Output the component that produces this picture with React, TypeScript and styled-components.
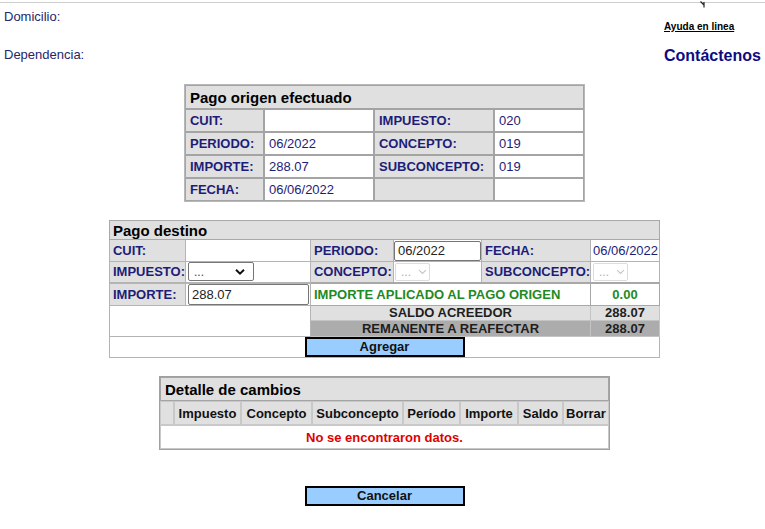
import React from "react";
import styled, { createGlobalStyle } from "styled-components";

const GlobalStyle = createGlobalStyle`
  html, body { margin: 0; padding: 0; background: #fff; }
  body { font-family: "Liberation Sans", Arial, Helvetica, sans-serif; }
`;

const FONT = `"Liberation Sans", Arial, Helvetica, sans-serif`;
const NAVY = "#1d1d78";

const Page = styled.div`
  width: 765px;
  padding-top: 2px;
`;

const TopBar = styled.header`
  border-top: 1px solid #cfcfcf;
  height: 81px;
  display: flex;
  justify-content: space-between;
  padding-left: 4px;
`;

const InfoList = styled.div`
  display: flex;
  flex-direction: column;
  gap: 23px;
  padding-top: 6px;
`;

const InfoLabel = styled.div`
  font-size: 13px;
  line-height: 15px;
  color: #262668;
`;

const Links = styled.div`
  width: 101px;
  display: flex;
  flex-direction: column;
  align-items: flex-start;
`;

const BrokenIcon = styled.svg`
  margin-left: 36px;
  margin-top: -2px;
  display: block;
`;

const HelpLink = styled.a`
  margin-top: 13px;
  font-size: 10px;
  line-height: 12px;
  font-weight: bold;
  color: #000;
  text-decoration: underline;
`;

const ContactLink = styled.a`
  margin-top: 14px;
  font-size: 16px;
  line-height: 18px;
  font-weight: bold;
  color: #0c0c80;
  text-decoration: none;
`;

const Content = styled.main`
  display: flex;
  flex-direction: column;
  align-items: center;
  padding-left: 4px;
`;

const OriginTable = styled.table`
  width: 401px;
  table-layout: fixed;
  border-collapse: separate;
  border-spacing: 0;
  border: 1px solid #b8b8b8;
  font-family: ${FONT};
`;

const OriginCell = styled.td<{ $label?: boolean }>`
  height: 21px;
  padding: 0 4px;
  border: 1px solid #a4a4a4;
  background: ${(p) => (p.$label ? "#e0e0e0" : "#fff")};
  color: ${NAVY};
  font-size: 13px;
  font-weight: ${(p) => (p.$label ? "bold" : "normal")};
  white-space: nowrap;
  overflow: hidden;
`;

const Caption = styled.th<{ $h: number }>`
  height: ${(p) => p.$h}px;
  padding: 0 4px;
  text-align: left;
  background: #e0e0e0;
  color: #000;
  font-size: 15px;
  font-weight: bold;
  border: 1px solid #a4a4a4;
`;

const DestTable = styled.table`
  margin-top: 18px;
  width: 550px;
  table-layout: fixed;
  border-collapse: collapse;
  border: 1px solid #a8a8a8;
  font-family: ${FONT};
`;

const DestCaption = styled.th`
  height: 18px;
  padding: 0 3px;
  text-align: left;
  background: #e0e0e0;
  color: #000;
  font-size: 15px;
  font-weight: bold;
  border: 1px solid #a8a8a8;
`;

const DestRow = styled.tr<{ $h: number }>`
  height: ${(p) => p.$h}px;
`;

const DestLabel = styled.td<{ $thick?: boolean }>`
  padding: 0 3px;
  border: 1px solid #b4b4b4;
  border-top-width: ${(p) => (p.$thick ? 2 : 1)}px;
  background: #e0e0e0;
  color: ${NAVY};
  font-size: 13px;
  font-weight: bold;
  white-space: nowrap;
  overflow: hidden;
`;

const DestValue = styled.td<{ $pad?: number; $thick?: boolean }>`
  padding: 0 ${(p) => p.$pad ?? 1}px;
  border: 1px solid #b4b4b4;
  border-top-width: ${(p) => (p.$thick ? 2 : 1)}px;
  background: #fff;
  color: ${NAVY};
  font-size: 13px;
  white-space: nowrap;
  overflow: hidden;
`;

const GreenCell = styled.td<{ $center?: boolean }>`
  padding: 0 3px;
  border: 1px solid #a8a8a8;
  border-top: 2px solid #a8a8a8;
  background: #fff;
  color: #238a23;
  font-size: 13px;
  font-weight: bold;
  text-align: ${(p) => (p.$center ? "center" : "left")};
  white-space: nowrap;
`;

const SummaryCell = styled.td<{ $tone: "light" | "dark" }>`
  padding: 0;
  border: 1px solid #c4c4c4;
  background: ${(p) => (p.$tone === "light" ? "#e0e0e0" : "#acacac")};
  color: #1e1e1e;
  font-size: 13px;
  font-weight: bold;
  text-align: center;
  line-height: 14px;
  white-space: nowrap;
`;

const BlankCell = styled.td`
  border: 1px solid #b4b4b4;
  background: #fff;
`;

const ActionCell = styled.td`
  padding: 0;
  border: 1px solid #b4b4b4;
  background: #fff;
  text-align: center;
  line-height: 0;
`;

const TextInput = styled.input<{ $w: number; $h: number }>`
  box-sizing: border-box;
  width: ${(p) => p.$w}px;
  height: ${(p) => p.$h}px;
  margin: 0;
  padding: 0 3px;
  border: 1px solid #767676;
  border-radius: 2px;
  font-family: ${FONT};
  font-size: 13px;
  color: #222;
  background: #fff;
  vertical-align: middle;
`;

const SelectWrap = styled.span<{ $w: number; $h: number }>`
  position: relative;
  display: inline-block;
  width: ${(p) => p.$w}px;
  height: ${(p) => p.$h}px;
  vertical-align: middle;
`;

const NativeSelect = styled.select<{ $off?: boolean }>`
  appearance: none;
  box-sizing: border-box;
  width: 100%;
  height: 100%;
  margin: 0;
  padding: 0 0 0 5px;
  border: 1px solid ${(p) => (p.$off ? "#dcdcdc" : "#767676")};
  border-radius: 2px;
  background: #fff;
  font-family: ${FONT};
  font-size: 12px;
  color: ${(p) => (p.$off ? "#b0b0b0" : "#444")};
  opacity: 1;
`;

const Chevron = styled.svg<{ $right: number }>`
  position: absolute;
  right: ${(p) => p.$right}px;
  top: 50%;
  transform: translateY(-50%);
  pointer-events: none;
`;

const BlueButton = styled.button`
  box-sizing: border-box;
  width: 160px;
  height: 20px;
  margin: 0;
  padding: 0;
  background: #99ccff;
  border: 2px solid #000;
  font-family: ${FONT};
  font-size: 13px;
  font-weight: bold;
  color: #111;
  line-height: 16px;
  cursor: pointer;
`;

const DetailTable = styled.table`
  margin-top: 18px;
  width: 451px;
  table-layout: fixed;
  border-collapse: separate;
  border-spacing: 0;
  border: 1px solid #a0a0a0;
  font-family: ${FONT};
`;

const ColHead = styled.th`
  height: 22px;
  padding: 0;
  border: 1px solid #c8c8c8;
  background: #e0e0e0;
  color: #111;
  font-size: 13px;
  font-weight: bold;
  text-align: center;
  white-space: nowrap;
  overflow: hidden;
`;

const EmptyMsg = styled.td`
  height: 22px;
  padding: 0;
  border: 1px solid #c8c8c8;
  background: #fff;
  color: #e00000;
  font-size: 13px;
  font-weight: bold;
  text-align: center;
`;

const Footer = styled.div`
  margin-top: 36px;
`;

function Select({ w, h, off }: { w: number; h: number; off?: boolean }) {
  return (
    <SelectWrap $w={w} $h={h}>
      <NativeSelect $off={off} disabled={off} defaultValue="...">
        <option value="...">...</option>
      </NativeSelect>
      <Chevron $right={off ? 3 : 9} width={off ? 9 : 10} height={off ? 6 : 7} viewBox="0 0 10 7">
        <path
          d="M1 1.2 L5 5.2 L9 1.2"
          fill="none"
          stroke={off ? "#c4c4c4" : "#111"}
          strokeWidth={off ? 1.2 : 2}
        />
      </Chevron>
    </SelectWrap>
  );
}

const origin = [
  ["CUIT:", "", "IMPUESTO:", "020"],
  ["PERIODO:", "06/2022", "CONCEPTO:", "019"],
  ["IMPORTE:", "288.07", "SUBCONCEPTO:", "019"],
  ["FECHA:", "06/06/2022", "", ""],
];

const detailCols: [string, number][] = [
  ["", 14],
  ["Impuesto", 67],
  ["Concepto", 71],
  ["Subconcepto", 91],
  ["Período", 57],
  ["Importe", 58],
  ["Saldo", 45],
  ["Borrar", 46],
];

export default function App() {
  return (
    <Page>
      <GlobalStyle />
      <TopBar>
        <InfoList>
          <InfoLabel>Domicilio:</InfoLabel>
          <InfoLabel>Dependencia:</InfoLabel>
        </InfoList>
        <Links>
          <BrokenIcon width="7" height="7" viewBox="0 0 7 7">
            <path d="M0.5 0.5 L4 4 M4 1 L4 6.5" stroke="#222" strokeWidth="1.2" fill="none" />
          </BrokenIcon>
          <HelpLink href="#">Ayuda en linea</HelpLink>
          <ContactLink href="#">Contáctenos</ContactLink>
        </Links>
      </TopBar>

      <Content>
        <OriginTable>
          <colgroup>
            <col style={{ width: 79 }} />
            <col style={{ width: 110 }} />
            <col style={{ width: 120 }} />
            <col style={{ width: 90 }} />
          </colgroup>
          <thead>
            <tr>
              <Caption $h={22} colSpan={4}>Pago origen efectuado</Caption>
            </tr>
          </thead>
          <tbody>
            {origin.map((r, i) => (
              <tr key={i}>
                <OriginCell $label>{r[0]}</OriginCell>
                <OriginCell>{r[1]}</OriginCell>
                <OriginCell $label>{r[2]}</OriginCell>
                <OriginCell>{r[3]}</OriginCell>
              </tr>
            ))}
          </tbody>
        </OriginTable>

        <DestTable>
          <colgroup>
            <col style={{ width: 76 }} />
            <col style={{ width: 125 }} />
            <col style={{ width: 83 }} />
            <col style={{ width: 88 }} />
            <col style={{ width: 109 }} />
            <col style={{ width: 69 }} />
          </colgroup>
          <thead>
            <tr>
              <DestCaption colSpan={6}>Pago destino</DestCaption>
            </tr>
          </thead>
          <tbody>
            <DestRow $h={22}>
              <DestLabel>CUIT:</DestLabel>
              <DestValue />
              <DestLabel>PERIODO:</DestLabel>
              <DestValue $pad={0}>
                <TextInput $w={87} $h={20} defaultValue="06/2022" />
              </DestValue>
              <DestLabel>FECHA:</DestLabel>
              <DestValue $pad={2}>06/06/2022</DestValue>
            </DestRow>
            <DestRow $h={21}>
              <DestLabel>IMPUESTO:</DestLabel>
              <DestValue $pad={2}>
                <Select w={66} h={19} />
              </DestValue>
              <DestLabel>CONCEPTO:</DestLabel>
              <DestValue $pad={1}>
                <Select w={35} h={18} off />
              </DestValue>
              <DestLabel>SUBCONCEPTO:</DestLabel>
              <DestValue $pad={2}>
                <Select w={35} h={18} off />
              </DestValue>
            </DestRow>
            <DestRow $h={23}>
              <DestLabel $thick>IMPORTE:</DestLabel>
              <DestValue $pad={2} $thick>
                <TextInput $w={121} $h={21} defaultValue="288.07" />
              </DestValue>
              <GreenCell colSpan={3}>IMPORTE APLICADO AL PAGO ORIGEN</GreenCell>
              <GreenCell $center>0.00</GreenCell>
            </DestRow>
            <DestRow $h={15}>
              <BlankCell colSpan={2} rowSpan={2} />
              <SummaryCell $tone="light" colSpan={3}>SALDO ACREEDOR</SummaryCell>
              <SummaryCell $tone="light">288.07</SummaryCell>
            </DestRow>
            <DestRow $h={16}>
              <SummaryCell $tone="dark" colSpan={3}>REMANENTE A REAFECTAR</SummaryCell>
              <SummaryCell $tone="dark">288.07</SummaryCell>
            </DestRow>
            <DestRow $h={21}>
              <ActionCell colSpan={6}>
                <BlueButton type="button">Agregar</BlueButton>
              </ActionCell>
            </DestRow>
          </tbody>
        </DestTable>

        <DetailTable>
          <colgroup>
            {detailCols.map(([n, w]) => (
              <col key={n || "blank"} style={{ width: w }} />
            ))}
          </colgroup>
          <thead>
            <tr>
              <Caption $h={22} colSpan={8}>Detalle de cambios</Caption>
            </tr>
            <tr>
              {detailCols.map(([n]) => (
                <ColHead key={n || "blank"}>{n}</ColHead>
              ))}
            </tr>
          </thead>
          <tbody>
            <tr>
              <EmptyMsg colSpan={8}>No se encontraron datos.</EmptyMsg>
            </tr>
          </tbody>
        </DetailTable>

        <Footer>
          <BlueButton type="button">Cancelar</BlueButton>
        </Footer>
      </Content>
    </Page>
  );
}
